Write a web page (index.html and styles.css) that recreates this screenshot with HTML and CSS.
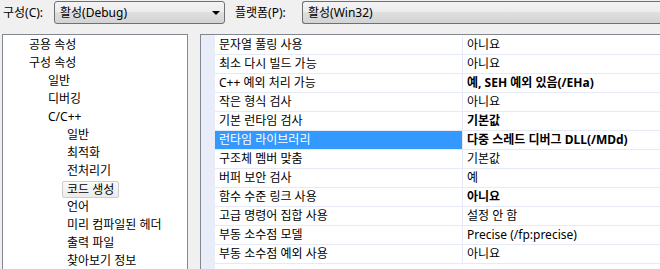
FILE: index.html
```html
<!DOCTYPE html>
<html lang="ko">
<head>
    <meta charset="UTF-8">
    <title>속성 페이지</title>
    <link rel="stylesheet" href="styles.css">
</head>
<body>
    <div class="toolbar">
        <span class="label label-config">구성(C):</span>
        <div class="combo combo-config">
            <span class="combo-text">활성(Debug)</span>
            <span class="combo-arrow"></span>
        </div>
        <span class="label label-platform">플랫폼(P):</span>
        <div class="combo combo-platform">
            <span class="combo-text">활성(Win32)</span>
        </div>
    </div>
    <div class="panes">
        <div class="tree">
            <div class="tree-row lv0">공용 속성</div>
            <div class="tree-row lv0">구성 속성</div>
            <div class="tree-row lv1">일반</div>
            <div class="tree-row lv1">디버깅</div>
            <div class="tree-row lv1">C/C++</div>
            <div class="tree-row lv2">일반</div>
            <div class="tree-row lv2">최적화</div>
            <div class="tree-row lv2">전처리기</div>
            <div class="tree-row lv2"><span class="tree-selected">코드 생성</span></div>
            <div class="tree-row lv2">언어</div>
            <div class="tree-row lv2">미리 컴파일된 헤더</div>
            <div class="tree-row lv2">출력 파일</div>
            <div class="tree-row lv2">찾아보기 정보</div>
        </div>
        <div class="grid">
            <div class="prop"><span class="name">문자열 풀링 사용</span><span class="value">아니요</span></div>
            <div class="prop"><span class="name">최소 다시 빌드 가능</span><span class="value">아니요</span></div>
            <div class="prop"><span class="name">C++ 예외 처리 가능</span><span class="value changed">예, SEH 예외 있음(/EHa)</span></div>
            <div class="prop"><span class="name">작은 형식 검사</span><span class="value">아니요</span></div>
            <div class="prop"><span class="name">기본 런타임 검사</span><span class="value changed">기본값</span></div>
            <div class="prop selected"><span class="name">런타임 라이브러리</span><span class="value changed">다중 스레드 디버그 DLL(/MDd)</span></div>
            <div class="prop"><span class="name">구조체 멤버 맞춤</span><span class="value">기본값</span></div>
            <div class="prop"><span class="name">버퍼 보안 검사</span><span class="value">예</span></div>
            <div class="prop"><span class="name">함수 수준 링크 사용</span><span class="value changed">아니요</span></div>
            <div class="prop"><span class="name">고급 명령어 집합 사용</span><span class="value">설정 안 함</span></div>
            <div class="prop"><span class="name">부동 소수점 모델</span><span class="value">Precise (/fp:precise)</span></div>
            <div class="prop"><span class="name">부동 소수점 예외 사용</span><span class="value">아니요</span></div>
        </div>
    </div>
</body>
</html>
```

FILE: styles.css
```css
body {
    margin: 0;
    background-color: #f0f0f0;
    font-family: "Noto Sans", "Noto Sans CJK KR", sans-serif;
    font-size: 12px;
    line-height: 18px;
    color: #000;
    overflow: hidden;
    height: 269px;
}
.toolbar {
    display: flex;
    align-items: center;
    height: 23px;
    padding: 1px 0 0 3px;
}
.label {
    flex: none;
}
.label-config {
    width: 51px;
}
.label-platform {
    width: 67px;
    margin-left: 10px;
}
.combo {
    box-sizing: border-box;
    height: 23px;
    display: flex;
    align-items: center;
    flex: none;
    padding: 0 4px 0 5px;
    border: 1px solid #707070;
    border-radius: 3px;
    background: linear-gradient(#f3f3f3, #ececec 50%, #dfdfdf 50%, #d3d3d3);
}
.combo-config {
    width: 171px;
}
/* runs off the right edge of the window */
.combo-platform {
    width: 358px;
    border-right: none;
    border-radius: 3px 0 0 3px;
}
.combo-text {
    flex: 1;
    white-space: nowrap;
}
.combo-arrow {
    width: 0;
    height: 0;
    border-left: 4px solid transparent;
    border-right: 4px solid transparent;
    border-top: 4px solid #000;
}
.panes {
    display: flex;
    margin-top: 10px;
    gap: 12px;
}
.tree {
    box-sizing: border-box;
    flex: none;
    width: 186px;
    height: 235px;
    margin-left: 2px;
    padding-top: 1px;
    background-color: #fff;
    border: 1px solid #828790;
    border-bottom: none;
    overflow: hidden;
}
.tree-row {
    display: flex;
    align-items: center;
    height: 18px;
    white-space: nowrap;
}
.lv0 {
    padding-left: 26px;
}
.lv1 {
    padding-left: 45px;
}
.lv2 {
    padding-left: 64px;
}
.tree-selected {
    line-height: 15px;
    padding: 0 4px;
    margin-left: -5px;
    border: 1px solid #cdcdcd;
    border-radius: 2px;
    background: linear-gradient(#fafafa, #ebebeb);
}
.grid {
    box-sizing: border-box;
    flex: none;
    width: 460px;
    height: 235px;
    padding-top: 1px;
    padding-left: 14px;
    background: linear-gradient(to right, #e9ecf9 14px, #fff 14px);
    border: 1px solid #828790;
    border-right: none;
    border-bottom: none;
    overflow: hidden;
}
.prop {
    display: flex;
    height: 18px;
    border-bottom: 1px solid #e6e9f7;
    background-color: #fff;
    white-space: nowrap;
}
.prop .name {
    box-sizing: border-box;
    flex: none;
    width: 248px;
    padding-left: 4px;
    border-right: 1px solid #e6e9f7;
}
.prop .value {
    padding-left: 4px;
}
.prop .changed {
    font-weight: bold;
}
.prop.selected .name {
    background-color: #3399ff;
    color: #fff;
}
```
